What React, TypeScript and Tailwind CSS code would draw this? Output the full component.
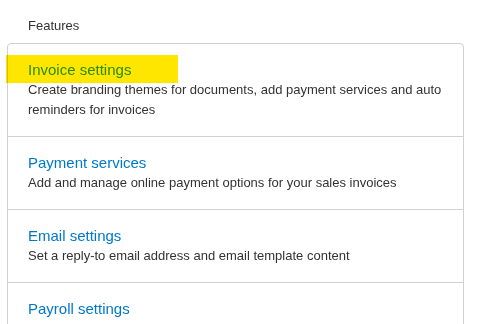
const features = [
  {
    title: "Invoice settings",
    desc: "Create branding themes for documents, add payment services and auto reminders for invoices",
    highlighted: true,
  },
  { title: "Payment services", desc: "Add and manage online payment options for your sales invoices" },
  { title: "Email settings", desc: "Set a reply-to email address and email template content" },
  { title: "Payroll settings", desc: "" },
];

export default function App() {
  return (
    <div className="h-[324px] overflow-hidden bg-white font-['Liberation_Sans',Arial,sans-serif]">
      <div className="pl-[28px] pt-[17px] text-[13px] leading-[17px] text-[#333]">Features</div>
      <div className="ml-[7px] mt-[9px] w-[457px] rounded-[4px] border border-[#d0d0d0]">
        {features.map((f, i) => (
          <div
            key={f.title}
            className={`relative px-[20px] pt-[16px] pb-[16px] ${i > 0 ? "border-t border-[#d0d0d0]" : ""}`}
          >
            <div
              className={`text-[15px] leading-[20px] ${f.highlighted ? "text-[#2a9c00]" : "text-[#0078c8]"}`}
            >
              {f.title}
            </div>
            {f.desc && <div className="text-[13px] leading-[20px] text-[#333]">{f.desc}</div>}
            {f.highlighted && (
              <div className="pointer-events-none absolute left-[-2px] top-[11px] h-[28px] w-[172px] bg-[#ffe600] mix-blend-multiply" />
            )}
          </div>
        ))}
      </div>
    </div>
  );
}
